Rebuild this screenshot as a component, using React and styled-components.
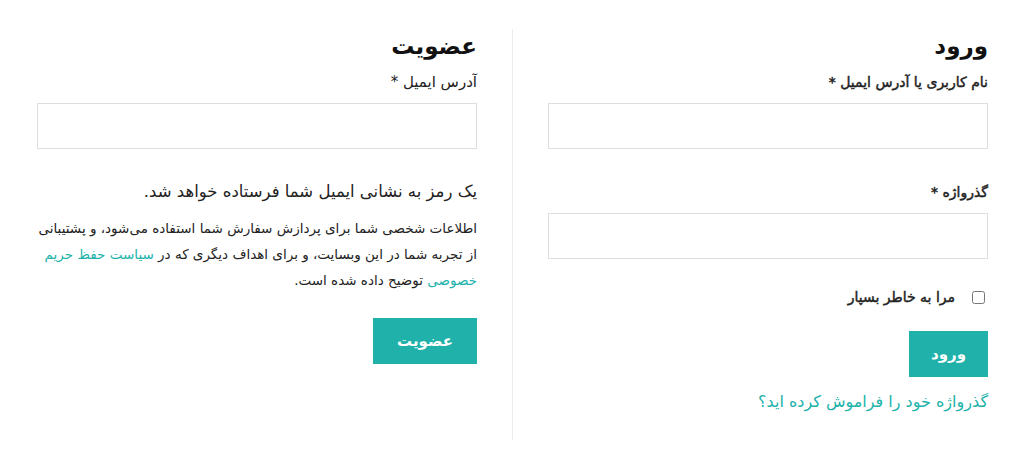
import React from 'react';
import styled, { createGlobalStyle } from 'styled-components';

const GlobalStyle = createGlobalStyle`
  html, body {
    margin: 0;
    padding: 0;
    background: #fff;
  }
  body {
    font-family: "DejaVu Sans", "Noto Sans", sans-serif;
    color: #222;
  }
`;

const Page = styled.div`
  direction: rtl;
  display: flex;
  gap: 35px;
  padding: 29px 36px 0;
  width: 1024px;
  box-sizing: border-box;
`;

const Column = styled.div`
  flex: 0 0 440px;
  display: flex;
  flex-direction: column;
  align-items: flex-start;
  padding-bottom: 27px;
`;

const Divider = styled.div`
  width: 1px;
  background: #ececec;
  align-self: stretch;
`;

const Heading = styled.h2`
  margin: 0 0 9px;
  font-size: 23px;
  line-height: 34px;
  font-weight: bold;
  color: #111;
`;

const Label = styled.label`
  display: block;
  font-size: ${p => (p.$bold ? 14 : 15)}px;
  line-height: 20px;
  color: #222;
  margin-bottom: 11px;
  -webkit-text-stroke: ${p => (p.$bold ? '0.45px #222' : '0')};
`;

const Input = styled.input`
  width: 100%;
  height: 46px;
  box-sizing: border-box;
  border: 1px solid #dedede;
  background: #fff;
  margin: 0 0 ${p => p.$after || 0}px;
  padding: 0 12px;
  font: inherit;
  outline: none;
`;

const CheckRow = styled.label`
  display: flex;
  align-items: center;
  gap: 17px;
  font-size: 14px;
  line-height: 20px;
  -webkit-text-stroke: 0.45px #222;
  margin: 0 3px 24px 0;
`;

const Check = styled.input`
  width: 13px;
  height: 13px;
  margin: 0;
`;

const Button = styled.button`
  background: #20b2aa;
  color: #fff;
  border: none;
  font-family: inherit;
  font-size: 15px;
  font-weight: bold;
  height: 46px;
  padding: 0 ${p => p.$pad || 20}px;
  cursor: pointer;
`;

const Forgot = styled.a`
  margin-top: 14px;
  color: #20b2aa;
  font-size: 16px;
  line-height: 22px;
  text-decoration: none;
`;

const Notice = styled.p`
  margin: 0 0 12px;
  font-size: 16.5px;
  line-height: 22px;
  color: #222;
`;

const Privacy = styled.p`
  margin: 0 0 25px;
  font-size: 13.5px;
  line-height: 26px;
  color: #222;
  a {
    color: #20b2aa;
    text-decoration: none;
  }
`;

export default function App() {
  return (
    <>
      <GlobalStyle />
      <Page>
        <Column>
          <Heading>ورود</Heading>
          <Label $bold>نام کاربری یا آدرس ایمیل *</Label>
          <Input type="text" $after={33} />
          <Label $bold>گذرواژه *</Label>
          <Input type="password" $after={28} />
          <CheckRow>
            <Check type="checkbox" />
            مرا به خاطر بسپار
          </CheckRow>
          <Button $pad={22}>ورود</Button>
          <Forgot href="#">گذرواژه خود را فراموش کرده اید؟</Forgot>
        </Column>
        <Divider />
        <Column>
          <Heading>عضویت</Heading>
          <Label>آدرس ایمیل *</Label>
          <Input type="email" $after={32} />
          <Notice>یک رمز به نشانی ایمیل شما فرستاده خواهد شد.</Notice>
          <Privacy>
            اطلاعات شخصی شما برای پردازش سفارش شما استفاده می‌شود، و پشتیبانی از تجربه شما در این وبسایت، و برای اهداف دیگری که در <a href="#">سیاست حفظ حریم خصوصی</a> توضیح داده شده است.
          </Privacy>
          <Button $pad={24}>عضویت</Button>
        </Column>
      </Page>
    </>
  );
}
